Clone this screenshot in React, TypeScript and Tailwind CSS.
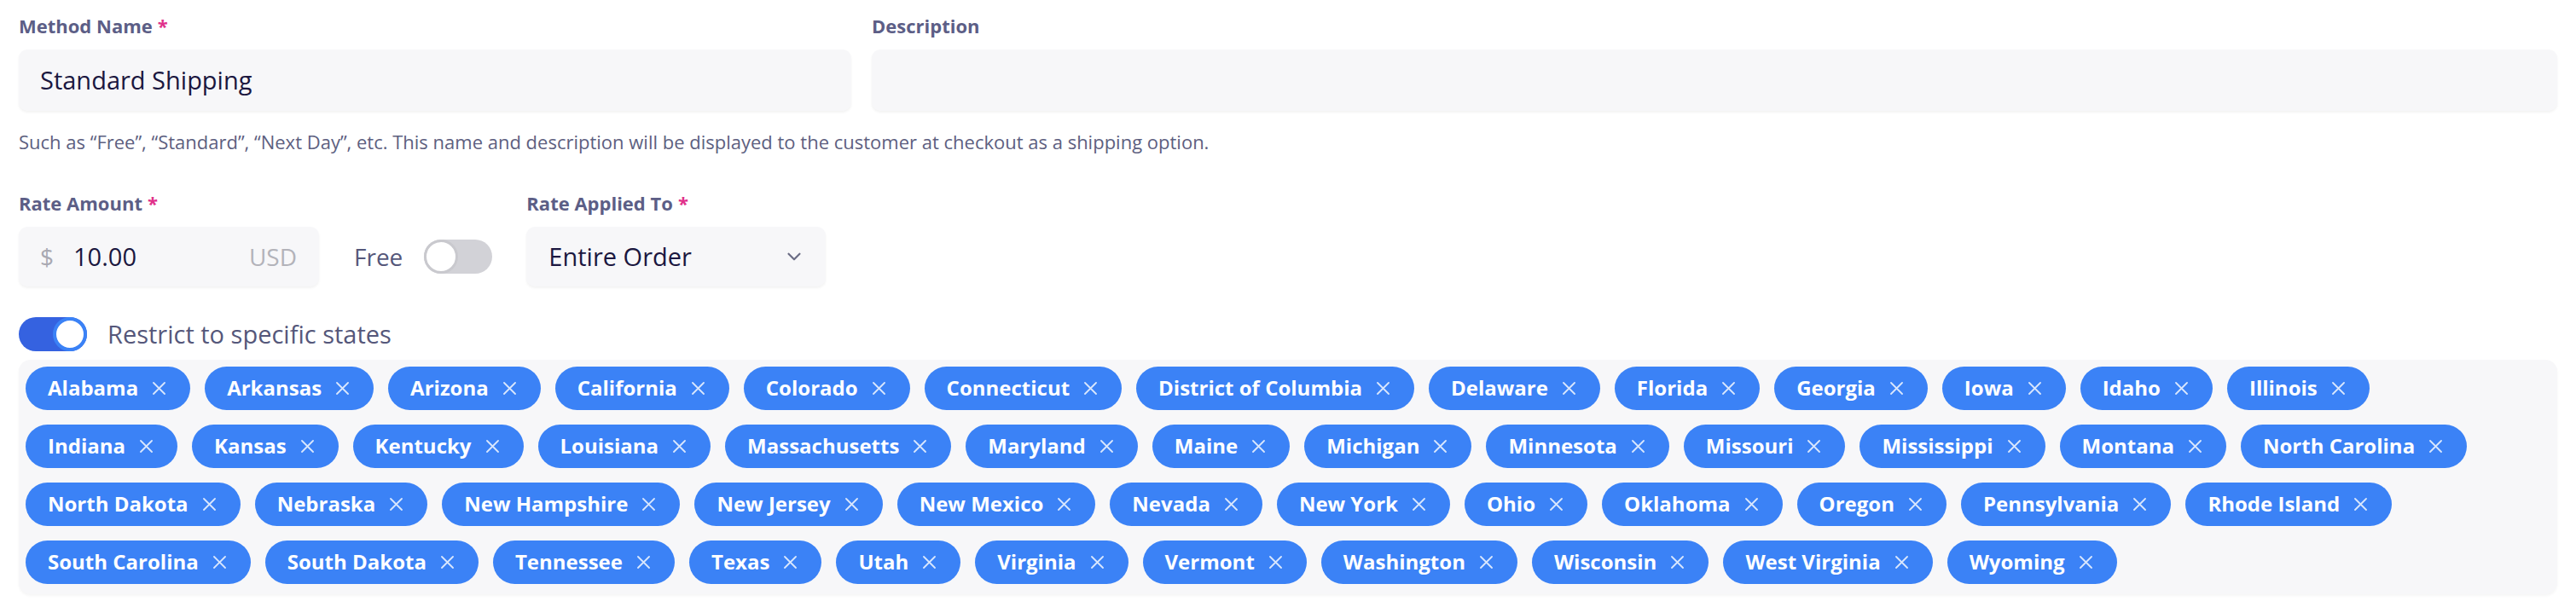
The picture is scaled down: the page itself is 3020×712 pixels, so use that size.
import { ChevronDown } from "lucide-react";

const states = [
  "Alabama",
  "Arkansas",
  "Arizona",
  "California",
  "Colorado",
  "Connecticut",
  "District of Columbia",
  "Delaware",
  "Florida",
  "Georgia",
  "Iowa",
  "Idaho",
  "Illinois",
  "Indiana",
  "Kansas",
  "Kentucky",
  "Louisiana",
  "Massachusetts",
  "Maryland",
  "Maine",
  "Michigan",
  "Minnesota",
  "Missouri",
  "Mississippi",
  "Montana",
  "North Carolina",
  "North Dakota",
  "Nebraska",
  "New Hampshire",
  "New Jersey",
  "New Mexico",
  "Nevada",
  "New York",
  "Ohio",
  "Oklahoma",
  "Oregon",
  "Pennsylvania",
  "Rhode Island",
  "South Carolina",
  "South Dakota",
  "Tennessee",
  "Texas",
  "Utah",
  "Virginia",
  "Vermont",
  "Washington",
  "Wisconsin",
  "West Virginia",
  "Wyoming",
];

function Label({ text, required }: { text: string; required?: boolean }) {
  return (
    <div className="mb-[11px] text-[22px] leading-[33px] font-bold text-[#5c5e86]">
      {text}
      {required && <span className="ml-[6px] text-[#e0318a]">*</span>}
    </div>
  );
}

function Toggle({ on }: { on: boolean }) {
  return (
    <div
      className={
        on
          ? "flex h-10 w-20 justify-end rounded-full bg-[#3562e0]"
          : "flex h-10 w-20 justify-start rounded-full bg-[#d2d2d7]"
      }
    >
      <div
        className={
          on
            ? "h-10 w-10 rounded-full border-[4px] border-[#3b82f6] bg-white"
            : "h-10 w-10 rounded-full border-[3px] border-[#c9c9ce] bg-white"
        }
      />
    </div>
  );
}

function Tag({ name }: { name: string }) {
  return (
    <div className="flex h-[51px] items-center gap-[17px] rounded-full bg-[#3b82f6] pl-[26px] pr-[29px] text-[24px] font-bold text-white">
      <span>{name}</span>
      <svg width="15" height="15" viewBox="0 0 15 15" className="text-white/80">
        <path d="M1 1L14 14M14 1L1 14" stroke="currentColor" strokeWidth="1.8" strokeLinecap="round" />
      </svg>
    </div>
  );
}

export default function App() {
  return (
    <div className="min-h-screen w-full bg-white px-[22px] pt-[14px] font-['Open_Sans',sans-serif]">
      <div className="grid grid-cols-3 gap-x-6">
        <div>
          <Label text="Method Name" required />
          <div className="flex h-[72px] items-center rounded-[10px] bg-[#f7f7f9] px-[25px] text-[29px] font-medium text-[#1b1740] shadow-[0_2px_3px_rgba(0,0,0,0.05)]">
            Standard Shipping
          </div>
        </div>
        <div className="col-span-2">
          <Label text="Description" />
          <div className="h-[72px] rounded-[10px] bg-[#f7f7f9] shadow-[0_2px_3px_rgba(0,0,0,0.05)]" />
        </div>
      </div>

      <p className="mt-[20px] text-[22px] leading-[33px] text-[#5d6080]">
        Such as “Free”, “Standard”, “Next Day”, etc. This name and description will be displayed to the customer at checkout as a shipping option.
      </p>

      <div className="mt-[39px] flex items-end">
        <div className="w-[352px]">
          <Label text="Rate Amount" required />
          <div className="flex h-[70px] items-center rounded-[10px] bg-[#f7f7f9] pl-[25px] pr-[26px] shadow-[0_2px_3px_rgba(0,0,0,0.05)]">
            <span className="text-[28px] text-[#a9a9b2]">$</span>
            <span className="ml-[23px] text-[29px] font-medium text-[#1b1740]">10.00</span>
            <span className="ml-auto text-[28px] text-[#b3b3ba]">USD</span>
          </div>
        </div>
        <div className="ml-[41px] flex h-[70px] items-center gap-[25px]">
          <span className="text-[28px] text-[#55577a]">Free</span>
          <Toggle on={false} />
        </div>
        <div className="ml-[40px] w-[351px]">
          <Label text="Rate Applied To" required />
          <div className="flex h-[70px] items-center justify-between rounded-[10px] bg-[#f7f7f9] pl-[26px] pr-[24px] shadow-[0_2px_3px_rgba(0,0,0,0.05)]">
            <span className="text-[29px] font-medium text-[#1b1740]">Entire Order</span>
            <ChevronDown size={26} strokeWidth={2} className="text-[#6b6d85]" />
          </div>
        </div>
      </div>

      <div className="mt-[34px] flex items-center gap-[24px]">
        <Toggle on />
        <span className="text-[29px] text-[#55577a]">Restrict to specific states</span>
      </div>

      <div className="mt-[8px] flex flex-wrap gap-[17px] rounded-[14px] bg-[#f7f7f9] pb-3 pl-2 pr-[56px] pt-2 shadow-[0_2px_3px_rgba(0,0,0,0.04)]">
        {states.map((s) => (
          <Tag key={s} name={s} />
        ))}
      </div>
    </div>
  );
}
